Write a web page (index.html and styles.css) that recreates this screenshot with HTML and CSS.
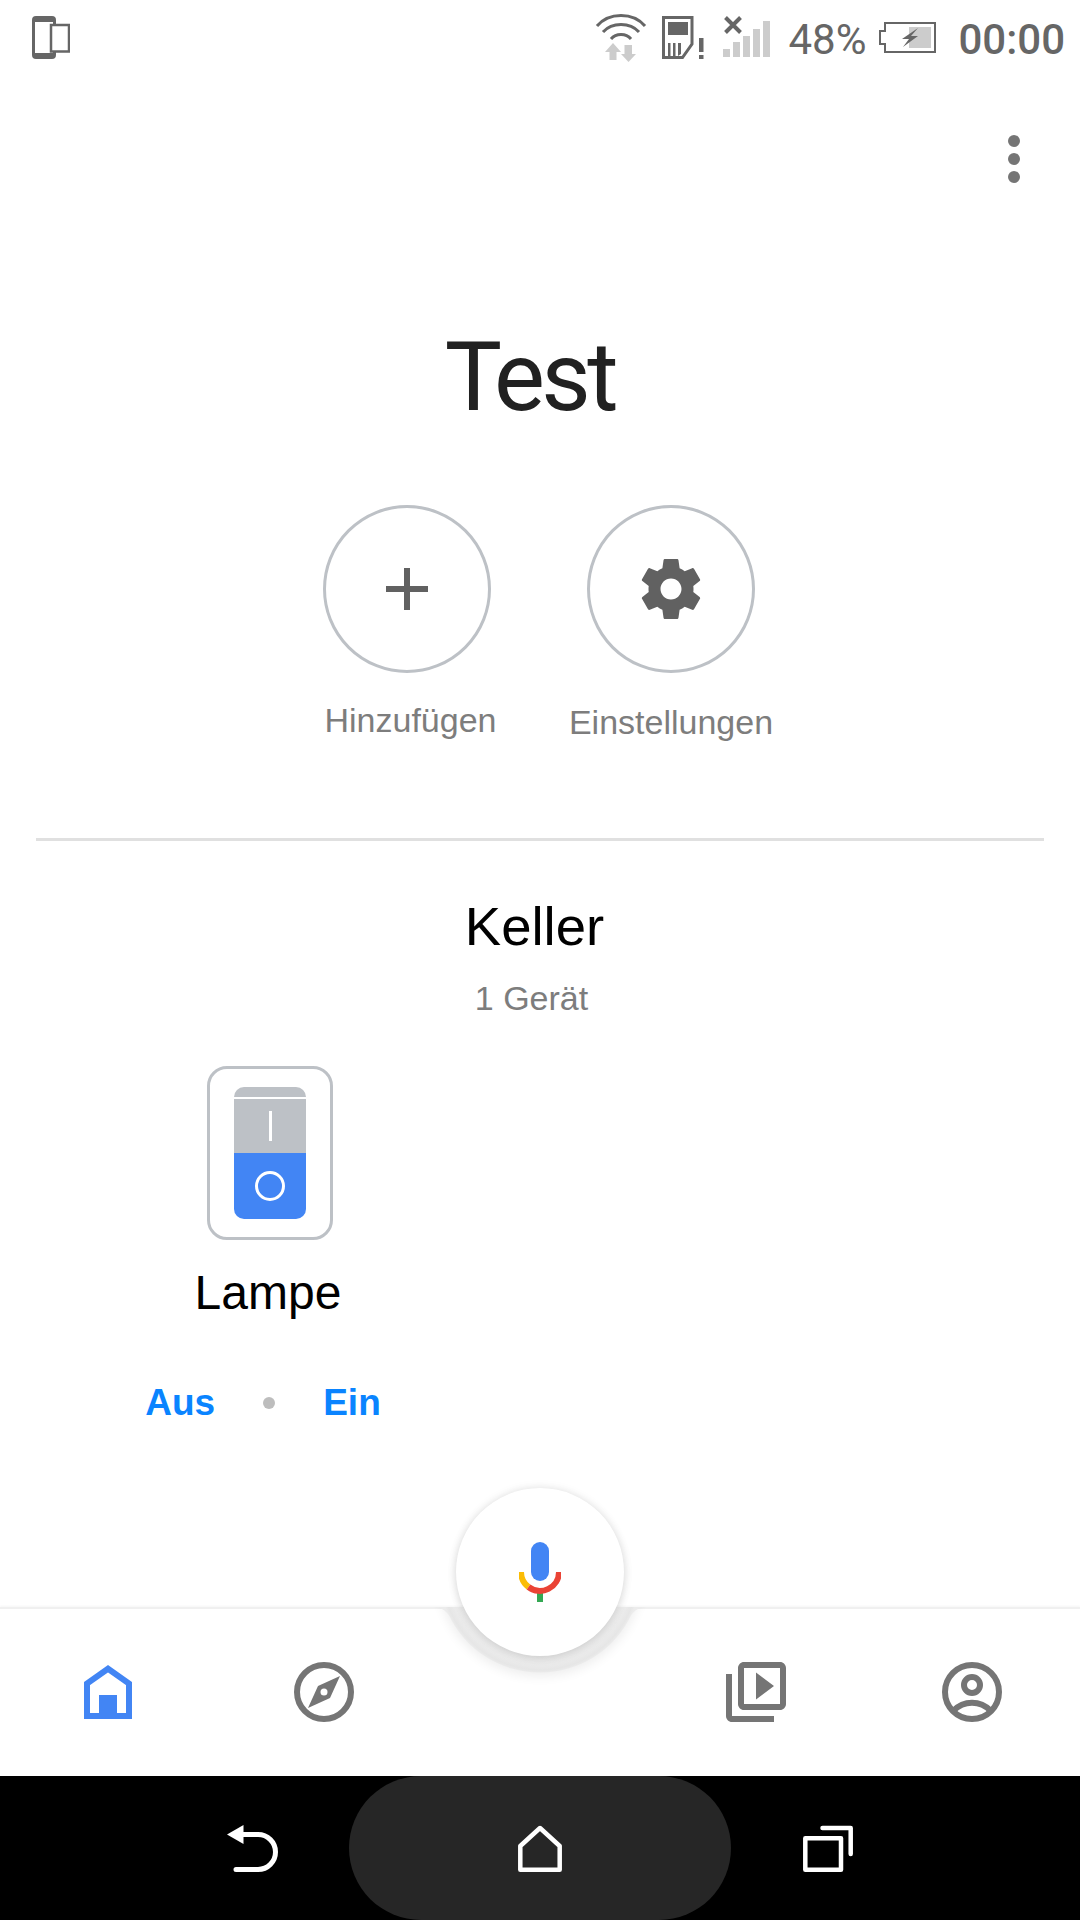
FILE: index.html
```html
<!DOCTYPE html>
<html lang="de">
<head>
    <meta charset="UTF-8">
    <meta name="viewport" content="width=device-width, initial-scale=1.0">
    <title>Test</title>
    <link rel="stylesheet" href="styles.css">
</head>
<body>
    <div class="screen">
        <div class="status-bar">
            <svg class="status-left" width="38" height="43" viewBox="0 0 38 43">
                <path d="M22.500 8V4Q22.500 1.500 20 1.500H4Q1.500 1.500 1.500 4V39Q1.500 41.500 4 41.500H20Q22.500 41.500 22.500 39V36" fill="none" stroke="#666" stroke-width="3"/>
                <path d="M2 2H22V6H2ZM2 37H22V41H2Z" fill="#666"/>
                <rect x="19" y="9" width="18" height="26.500" fill="#fff" stroke="#666" stroke-width="2.500"/>
            </svg>
            <div class="status-right">
                <svg class="icon-wifi" width="52" height="49" viewBox="0 0 52 49">
                    <g fill="none" stroke="#666" stroke-width="3">
                        <path d="M2 13C14 -1 38 -1 50 13"/>
                        <path d="M8 19C17 9 35 9 44 19"/>
                        <path d="M16 26C21 20 31 20 36 26"/>
                    </g>
                    <path d="M18 30L26 39H21.500V47H14.500V39H10ZM29.500 32H37V41H41L33.500 49L26 41H29.500Z" fill="#ccc"/>
                </svg>
                <svg class="icon-sim" width="44" height="43" viewBox="0 0 44 43">
                    <path d="M1.500 1.500H30V28L20.500 41.500H1.500Z" fill="none" stroke="#666" stroke-width="3"/>
                    <path d="M6 6H26V19H6ZM6 27H8.500V40H6ZM11 27H13.500V40H11ZM16 27H19V38L16 40Z" fill="#666"/>
                    <path d="M37 22H41.500V36H37ZM37 39H41.500V43H37Z" fill="#666"/>
                </svg>
                <svg class="icon-signal" width="47" height="42" viewBox="0 0 47 42">
                    <path d="M2.500 2.500L17.500 17.500M17.500 2.500L2.500 17.500" fill="none" stroke="#666" stroke-width="4"/>
                    <path d="M0 34H7V42H0ZM10 27H17V42H10ZM20 21H27V42H20ZM30 14H37V42H30ZM40 6H47V42H40Z" fill="#ccc"/>
                </svg>
                <span class="battery-pct">48%</span>
                <svg class="icon-battery" width="57" height="31" viewBox="0 0 57 31">
                    <path d="M6 9V1H56V30H6V22H1V9Z" fill="none" stroke="#666" stroke-width="2"/>
                    <rect x="30" y="5" width="22" height="21" fill="#ccc"/>
                    <path d="M39 6L23 17H30L24 25L39 14H32Z" fill="#666"/>
                </svg>
                <span class="clock">00:00</span>
            </div>
        </div>

        <div class="menu-row">
            <div class="menu-dots"><i></i><i></i><i></i></div>
        </div>

        <h1 class="home-title">Test</h1>

        <div class="actions">
            <div class="action action-add">
                <div class="action-circle">
                    <svg width="42" height="42" viewBox="0 0 42 42"><path d="M18 0H24V18H42V24H24V42H18V24H0V18H18Z" fill="#616161"/></svg>
                </div>
                <span class="action-label">Hinzufügen</span>
            </div>
            <div class="action action-settings">
                <div class="action-circle">
                    <svg width="72" height="72" viewBox="0 0 24 24"><path fill="#616161" d="M19.430 12.980c.04-.32.07-.64.07-.98s-.03-.66-.07-.98l2.110-1.650c.19-.15.240-.42.120-.64l-2-3.460c-.12-.22-.39-.3-.61-.22l-2.490 1c-.52-.4-1.080-.73-1.690-.98l-.38-2.650C14.460 2.180 14.250 2 14 2h-4c-.25 0-.46.180-.49.420l-.38 2.650c-.61.25-1.170.59-1.690.98l-2.490-1c-.23-.09-.49 0-.61.22l-2 3.460c-.13.220-.07.490.12.640l2.110 1.650c-.04.320-.07.650-.07.980s.03.660.07.980l-2.110 1.650c-.19.150-.24.420-.12.640l2 3.460c.12.220.39.300.61.220l2.490-1c.52.400 1.080.730 1.690.980l.38 2.650c.03.240.24.420.49.420h4c.25 0 .46-.180.49-.420l.38-2.650c.61-.250 1.170-.590 1.690-.980l2.490 1c.23.090.49 0 .61-.220l2-3.460c.12-.220.07-.490-.12-.640l-2.110-1.650zM12 15.500c-1.930 0-3.500-1.570-3.500-3.500s1.570-3.500 3.500-3.500 3.500 1.570 3.500 3.500-1.570 3.500-3.500 3.500z"/></svg>
                </div>
                <span class="action-label">Einstellungen</span>
            </div>
        </div>

        <div class="divider"></div>

        <div class="room">
            <div class="room-name">Keller</div>
            <div class="room-count">1 Gerät</div>
        </div>

        <div class="device">
            <div class="device-card">
                <div class="rocker">
                    <div class="rocker-top"><i class="rocker-line"></i></div>
                    <div class="rocker-bottom"><i class="rocker-ring"></i></div>
                </div>
            </div>
            <div class="device-name">Lampe</div>
            <div class="device-controls">
                <span class="device-btn">Aus</span>
                <i class="device-sep"></i>
                <span class="device-btn">Ein</span>
            </div>
        </div>

        <div class="bottom-nav">
            <svg class="nav-curve" width="240" height="100" viewBox="0 0 240 100">
                <defs>
                    <radialGradient id="notchShade" gradientUnits="userSpaceOnUse" cx="120" cy="-35" r="101">
                        <stop offset="0.82" stop-color="#f3f3f3"/>
                        <stop offset="0.97" stop-color="#e6e6e6"/>
                        <stop offset="1" stop-color="#ececec"/>
                    </radialGradient>
                    <filter id="notchBlur" x="-20%" y="-20%" width="140%" height="140%"><feGaussianBlur stdDeviation="6"/></filter>
                </defs>
                <circle cx="120" cy="-33" r="102" fill="#000" opacity="0.07" filter="url(#notchBlur)"/>
                <path d="M13 0C21 0 25 3 28.800 8A101 101 0 0 0 211.200 8C215 3 219 0 227 0Z" fill="url(#notchShade)"/>
            </svg>
            <div class="nav-item nav-home">
                <svg width="48" height="54" viewBox="0 0 48 54"><path d="M24 3.700L3 18.500V51H45V18.500Z" fill="none" stroke="#4285f4" stroke-width="6"/><rect x="15" y="30" width="18" height="20" fill="#4285f4"/></svg>
            </div>
            <div class="nav-item">
                <svg width="60" height="60" viewBox="0 0 60 60"><circle cx="30" cy="30" r="27" fill="none" stroke="#757575" stroke-width="6"/><path d="M46 14L24 24L14 46L36 36Z" fill="#757575"/><circle cx="30" cy="30" r="3.500" fill="#fff"/></svg>
            </div>
            <div class="nav-gap"></div>
            <div class="nav-item">
                <svg width="60" height="60" viewBox="2 2 20 20"><path fill="#757575" d="M4 6H2v14c0 1.100.9 2 2 2h14v-2H4V6zm16-4H8c-1.100 0-2 .9-2 2v12c0 1.100.9 2 2 2h12c1.100 0 2-.9 2-2V4c0-1.100-.9-2-2-2zm0 14H8V4h12v12zM12 14.500v-9l6 4.500-6 4.500z"/></svg>
            </div>
            <div class="nav-item">
                <svg width="60" height="60" viewBox="0 0 60 60"><g fill="none" stroke="#757575" stroke-width="6"><circle cx="30" cy="30" r="27"/><circle cx="30" cy="23" r="8"/><path d="M11 49C22 38 38 38 49 49"/></g></svg>
            </div>
        </div>

        <div class="mic-fab">
            <svg width="42" height="60" viewBox="0 0 42 60">
                <rect x="12" y="0" width="18" height="39" rx="9" fill="#4285f4"/>
                <rect x="18" y="50" width="6" height="10" fill="#34a853"/>
                <path d="M2 30A19 19 0 0 0 9.500 45" fill="none" stroke="#fbbc05" stroke-width="6"/>
                <path d="M9.500 45A19 19 0 0 0 40 30" fill="none" stroke="#ea4335" stroke-width="6"/>
            </svg>
        </div>

        <div class="system-nav">
            <svg width="51" height="47" viewBox="0 0 51 47"><path d="M16 9.500H31A17.500 17.500 0 0 1 31 44.500H9" fill="none" stroke="#fff" stroke-width="5" stroke-linecap="round"/><path d="M16.500 0V19L0 9.500Z" fill="#fff"/></svg>
            <div class="sys-home">
                <svg width="44" height="47" viewBox="0 0 44 47"><path d="M22 3L2.300 21V44.700H41.700V21Z" fill="none" stroke="#fff" stroke-width="4.500" stroke-linejoin="round"/></svg>
            </div>
            <svg width="50" height="47" viewBox="0 0 50 47"><path d="M2.300 13.300H38V44.700H2.300Z" fill="none" stroke="#fff" stroke-width="4.500" stroke-linejoin="round"/><path d="M19.500 3H47.700V29" fill="none" stroke="#fff" stroke-width="4.500" stroke-linecap="round" stroke-linejoin="round"/></svg>
        </div>
    </div>
</body>
</html>
```

FILE: styles.css
```css
html, body {
    margin: 0;
    padding: 0;
}

body {
    font-family: 'Liberation Sans', Arial, sans-serif;
    background: #fff;
}

.screen {
    position: relative;
    width: 1080px;
    height: 1920px;
    overflow: hidden;
    display: flex;
    flex-direction: column;
    background: #fff;
}

/* status bar */
.status-bar {
    height: 72px;
    padding: 13px 15px 0 32px;
    box-sizing: border-box;
    display: flex;
    justify-content: space-between;
    align-items: flex-start;
    flex: none;
}

.status-left {
    margin-top: 3px;
}

.status-right {
    display: flex;
    align-items: flex-start;
    font-family: Roboto, sans-serif;
    font-size: 42px;
    line-height: 50px;
    color: #666;
}

.icon-wifi {
    margin-right: 15px;
}

.icon-sim {
    margin: 3px 17px 0 0;
}

.icon-signal {
    margin: 2px 18px 0 0;
}

.battery-pct {
    margin: 2px 13px 0 0;
}

.icon-battery {
    margin: 9px 22px 0 0;
}

.clock {
    font-weight: 500;
    margin-top: 2px;
}

/* menu */
.menu-row {
    display: flex;
    justify-content: flex-end;
    padding: 63px 60px 0 0;
    flex: none;
}

.menu-dots {
    display: flex;
    flex-direction: column;
    gap: 6px;
}

.menu-dots i {
    display: block;
    width: 12px;
    height: 12px;
    border-radius: 50%;
    background: #757575;
}

/* title + round buttons */
.home-title {
    margin: 144px 0 0;
    font-family: Roboto, sans-serif;
    font-weight: 400;
    font-size: 96px;
    letter-spacing: -3.5px;
    line-height: 100px;
    text-align: center;
    color: #212121;
    padding-right: 20px;
    flex: none;
}

.actions {
    margin-top: 78px;
    padding-left: 323px;
    display: flex;
    gap: 96px;
    flex: none;
}

.action {
    width: 168px;
    display: flex;
    flex-direction: column;
    align-items: center;
}

.action-circle {
    width: 168px;
    height: 168px;
    box-sizing: border-box;
    border: 3px solid #bdc1c6;
    border-radius: 50%;
    display: flex;
    align-items: center;
    justify-content: center;
}

.action-label {
    margin-top: 29px;
    font-size: 34px;
    line-height: 40px;
    color: #7d7d7d;
    white-space: nowrap;
}

.action-add .action-label {
    margin: 27px 0 0 7px;
}

.divider {
    margin: 96px 36px 0;
    height: 3px;
    background: #e0e0e0;
    flex: none;
}

/* room */
.room {
    margin-top: 54px;
    text-align: center;
    flex: none;
}

.room-name {
    font-size: 54.500px;
    line-height: 64px;
    color: #000;
    padding-right: 11px;
}

.room-count {
    margin-top: 19px;
    font-size: 34px;
    line-height: 40px;
    color: #7d7d7d;
    padding-right: 17px;
}

/* device */
.device {
    margin-top: 48px;
    width: 540px;
    display: flex;
    flex-direction: column;
    align-items: center;
    flex: none;
}

.device-card {
    width: 126px;
    height: 174px;
    box-sizing: border-box;
    border: 3px solid #bdc1c6;
    border-radius: 20px;
    display: flex;
    align-items: center;
    justify-content: center;
}

.rocker {
    width: 72px;
    height: 132px;
    border-radius: 10px;
    overflow: hidden;
}

.rocker-top {
    height: 66px;
    box-sizing: border-box;
    background: #bdc1c6;
    display: flex;
    justify-content: center;
    padding-top: 24px;
    background-image: linear-gradient(#fff, #fff);
    background-repeat: no-repeat;
    background-size: 100% 2px;
    background-position: 0 10px;
}

.rocker-line {
    display: block;
    width: 3px;
    height: 30px;
    background: #fff;
}

.rocker-bottom {
    height: 66px;
    background: #4285f4;
    display: flex;
    align-items: center;
    justify-content: center;
}

.rocker-ring {
    display: block;
    width: 30px;
    height: 30px;
    box-sizing: border-box;
    border: 3px solid #fff;
    border-radius: 50%;
}

.device-name {
    margin: 25px 4px 0 0;
    font-size: 48px;
    line-height: 56px;
    color: #000;
}

.device-controls {
    margin: 60px 14px 0 0;
    display: flex;
    align-items: center;
    gap: 48px;
    font-size: 37px;
    font-weight: bold;
    line-height: 44px;
    color: #0a84ff;
}

.device-sep {
    display: block;
    width: 12px;
    height: 12px;
    border-radius: 50%;
    background: #bdbdbd;
}

/* bottom tabs */
.bottom-nav {
    position: relative;
    margin-top: auto;
    height: 169px;
    box-sizing: border-box;
    border-top: 2px solid #f0f0f0;
    box-shadow: 0 -1px 2px rgba(0, 0, 0, 0.04);
    background: #fff;
    display: flex;
    justify-content: space-around;
    padding-top: 53px;
    flex: none;
}

.nav-curve {
    position: absolute;
    left: 420px;
    top: -2px;
}

.nav-item {
    position: relative;
    width: 60px;
    display: flex;
    justify-content: center;
}

.nav-home {
    padding-top: 3px;
}

.nav-gap {
    width: 60px;
}

.mic-fab {
    position: absolute;
    left: 456px;
    top: 1488px;
    width: 168px;
    height: 168px;
    border-radius: 50%;
    background: #fff;
    box-shadow: 0 2px 8px rgba(0, 0, 0, 0.14), 0 0 12px rgba(0, 0, 0, 0.05);
    display: flex;
    align-items: center;
    justify-content: center;
}

/* android nav */
.system-nav {
    height: 144px;
    background: #000;
    display: flex;
    justify-content: center;
    align-items: center;
    flex: none;
}

.sys-home {
    width: 382px;
    height: 144px;
    margin: 0 72px 0 71px;
    border-radius: 72px;
    background: #262626;
    display: flex;
    align-items: center;
    justify-content: center;
}
```
